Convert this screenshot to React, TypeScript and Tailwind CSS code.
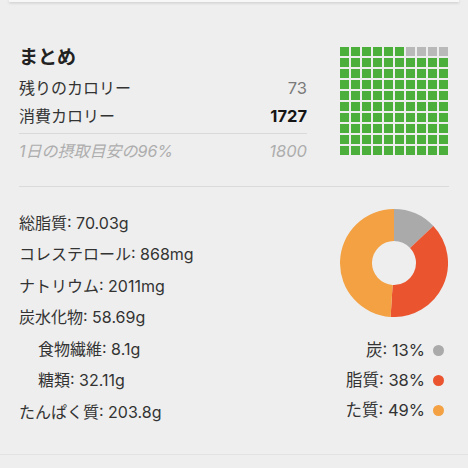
import React from "react";

const FONT = { fontFamily: 'Inter, "Noto Sans CJK JP", sans-serif' };

function arc(cx: number, cy: number, r: number, ri: number, a0: number, a1: number) {
  const p = (a: number, rr: number) => {
    const t = ((a - 90) * Math.PI) / 180;
    return [cx + rr * Math.cos(t), cy + rr * Math.sin(t)];
  };
  const large = a1 - a0 > 180 ? 1 : 0;
  const [x0, y0] = p(a0, r);
  const [x1, y1] = p(a1, r);
  const [x2, y2] = p(a1, ri);
  const [x3, y3] = p(a0, ri);
  return `M${x0} ${y0} A${r} ${r} 0 ${large} 1 ${x1} ${y1} L${x2} ${y2} A${ri} ${ri} 0 ${large} 0 ${x3} ${y3} Z`;
}

function Donut() {
  const slices = [
    { v: 13, c: "#aaaaaa" },
    { v: 38, c: "#ea5530" },
    { v: 49, c: "#f3a142" },
  ];
  let acc = 0;
  return (
    <svg width="108" height="108" viewBox="0 0 108 108">
      {slices.map((s, i) => {
        const a0 = (acc / 100) * 360;
        acc += s.v;
        const a1 = (acc / 100) * 360;
        return <path key={i} d={arc(54, 54, 54, 22, a0, a1)} fill={s.c} />;
      })}
    </svg>
  );
}

function Waffle() {
  const cells = Array.from({ length: 100 }, (_, i) => i);
  return (
    <div className="grid grid-cols-[repeat(10,9px)] gap-[2px]">
      {cells.map((i) => (
        <div
          key={i}
          className={
            i >= 6 && i < 10
              ? "w-[9px] h-[9px] bg-[#b9b9b9]"
              : "w-[9px] h-[9px] bg-[#4cae3b]"
          }
        />
      ))}
    </div>
  );
}

const leftRows: { t: string; indent?: boolean }[] = [
  { t: "総脂質: 70.03g" },
  { t: "コレステロール: 868mg" },
  { t: "ナトリウム: 2011mg" },
  { t: "炭水化物: 58.69g" },
  { t: "食物繊維: 8.1g", indent: true },
  { t: "糖類: 32.11g", indent: true },
  { t: "たんぱく質: 203.8g" },
];

const legend = [
  { t: "炭: 13%", c: "bg-[#aaaaaa]" },
  { t: "脂質: 38%", c: "bg-[#ea5530]" },
  { t: "た質: 49%", c: "bg-[#f3a142]" },
];

export default function App() {
  return (
    <div className="w-[468px] h-[468px] bg-[#eeeeee] flex flex-col overflow-hidden" style={FONT}>
      <div className="mx-[9px] h-[2px] bg-[#f7f7f7] shadow-[0_1px_3px_rgba(0,0,0,0.18)] shrink-0" />

      <div className="h-[184px] px-[19px] pt-[44px] flex justify-between shrink-0">
        <div className="w-[288px] flex flex-col">
          <div className="h-[24px] leading-[24px] text-[19px] font-bold text-[#222]">まとめ</div>
          <div className="mt-[4px] h-[28px] flex items-center justify-between text-[16px] text-[#333]">
            <span>残りのカロリー</span>
            <span className="text-[16.5px] text-[#7a7a7a]">73</span>
          </div>
          <div className="h-[28px] flex items-center justify-between text-[16px] text-[#333]">
            <span>消費カロリー</span>
            <span className="text-[16.5px] font-bold text-[#151515]">1727</span>
          </div>
          <div className="mt-[3px] h-px bg-[#d9d9d9]" />
          <div className="mt-[3px] h-[28px] flex items-center justify-between text-[16px] italic text-[#adadad]">
            <span>1日の摂取目安の96%</span>
            <span className="text-[16.5px]">1800</span>
          </div>
        </div>
        <div className="mt-[1px] mr-[1px]">
          <Waffle />
        </div>
      </div>

      <div className="mx-[19px] h-px bg-[#dadada] shrink-0" />

      <div className="h-[267px] pl-[19px] pr-[20px] pt-[20px] flex justify-between shrink-0">
        <div className="flex flex-col">
          {leftRows.map((r) => (
            <div
              key={r.t}
              className={
                r.indent
                  ? "h-[31.5px] flex items-center pl-[19px] text-[16px] text-[#333]"
                  : "h-[31.5px] flex items-center text-[16px] text-[#333]"
              }
            >
              {r.t}
            </div>
          ))}
        </div>
        <div className="flex flex-col items-end">
          <div className="mt-[2px]">
            <Donut />
          </div>
          <div className="mt-[18px] mr-[4px] flex flex-col items-end">
            {legend.map((l) => (
              <div key={l.t} className="h-[30px] flex items-center gap-[8px] text-[16.5px] text-[#333]">
                <span>{l.t}</span>
                <span className={`w-[11px] h-[11px] rounded-full ${l.c}`} />
              </div>
            ))}
          </div>
        </div>
      </div>

      <div className="h-px bg-[#e2e2e2] shrink-0" />
    </div>
  );
}
